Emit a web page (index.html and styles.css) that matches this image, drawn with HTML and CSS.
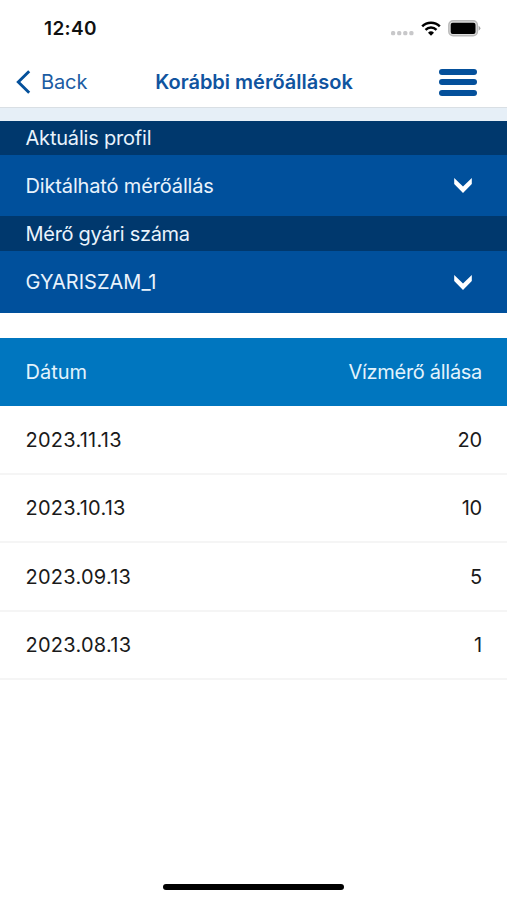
FILE: index.html
```html
<!DOCTYPE html>
<html lang="hu">
<head>
    <meta charset="UTF-8">
    <meta name="viewport" content="width=device-width, initial-scale=1.0">
    <title>Korábbi mérőállások</title>
    <link rel="stylesheet" href="styles.css">
</head>
<body>
    <div class="status-bar">
        <span class="time">12:40</span>
        <div class="status-icons">
            <svg class="signal" width="23" height="5" viewBox="0 0 23 5" fill="#c8c8ca">
                <rect x="0" y="0" width="4.2" height="4.2" rx="1.5"/>
                <rect x="6.1" y="0" width="4.2" height="4.2" rx="1.5"/>
                <rect x="12.2" y="0" width="4.2" height="4.2" rx="1.5"/>
                <rect x="18.3" y="0" width="4.2" height="4.2" rx="1.5"/>
            </svg>
            <svg class="wifi" width="20" height="15" viewBox="0 0 20 15">
                <path d="M1.2 5.3a12.6 12.6 0 0 1 17.6 0M4.5 8.8a8 8 0 0 1 11 0" fill="none" stroke="#000" stroke-width="2.5"/>
                <path d="M10 14.8l-3-3.1a4.4 4.4 0 0 1 6 0z"/>
            </svg>
            <svg class="battery" width="33" height="17" viewBox="0 0 33 17">
                <rect x="0.8" y="0.8" width="28.6" height="15" rx="4.3" fill="#ddd" stroke="#b9b9b9" stroke-width="1.4"/>
                <rect x="2.7" y="2.7" width="24.8" height="11.2" rx="2"/>
                <path d="M30.6 5.8q3.6 2.5 0 5z" fill="#a5a5a5"/>
            </svg>
        </div>
    </div>

    <header class="navbar">
        <a href="#" class="back">
            <svg width="15" height="24" viewBox="0 0 15 24">
                <path d="M13.2 1.3L2.3 12l10.9 10.7" fill="none" stroke="#04509b" stroke-width="2.9"/>
            </svg>
            <span>Back</span>
        </a>
        <h1>Korábbi mérőállások</h1>
        <button class="menu" aria-label="Menü">
            <i></i>
            <i></i>
            <i></i>
        </button>
    </header>

    <section class="filters">
        <div class="filter-label"><span class="label-profile">Aktuális profil</span></div>
        <div class="filter-value">
            <span class="value-profile">Diktálható mérőállás</span>
            <svg width="18" height="15" viewBox="0 0 18 15"><path d="M0.2 0L9 8.6 17.8 0v6L9 15 0.2 6z" fill="#fff"/></svg>
        </div>
        <div class="filter-label meter"><span class="label-meter">Mérő gyári száma</span></div>
        <div class="filter-value meter">
            <span class="value-meter">GYARISZAM_1</span>
            <svg width="18" height="15" viewBox="0 0 18 15"><path d="M0.2 0L9 8.6 17.8 0v6L9 15 0.2 6z" fill="#fff"/></svg>
        </div>
    </section>

    <section class="readings">
        <div class="row head"><span class="head-date">Dátum</span><span class="head-value">Vízmérő állása</span></div>
        <div class="row"><span class="date">2023.11.13</span><span>20</span></div>
        <div class="row"><span class="date">2023.10.13</span><span>10</span></div>
        <div class="row"><span class="date">2023.09.13</span><span>5</span></div>
        <div class="row"><span class="date">2023.08.13</span><span>1</span></div>
    </section>

    <div class="home-indicator"></div>
</body>
</html>
```
FILE: styles.css
```css
* {
    box-sizing: border-box;
}
body {
    font-family: Inter, "Liberation Sans", sans-serif;
    font-size: 20px;
    background: #fff;
    color: #1a1a1a;
    margin: 0;
    height: 900px;
    display: flex;
    flex-direction: column;
    overflow: hidden;
}
.status-bar {
    height: 57px;
    padding: 0 26px 0 44px;
    display: flex;
    align-items: center;
    justify-content: space-between;
}
.time {
    color: #111;
    font-size: 19px;
    font-weight: 600;
    letter-spacing: 0.35px;
}
.status-icons {
    display: flex;
    align-items: center;
}
.signal {
    margin: 9px 7px 0 0;
}
.wifi {
    margin-right: 7px;
}
.navbar {
    height: 51px;
    padding: 0 30px 0 16px;
    border-bottom: 1px solid #d9dfe4;
    color: #1b5ca3;
    display: grid;
    grid-template-columns: 107px 1fr 92px;
    align-items: center;
}
.back {
    display: flex;
    align-items: center;
    gap: 10px;
    color: inherit;
    text-decoration: none;
    letter-spacing: -0.1px;
}
h1 {
    margin: 0;
    color: #10549f;
    font-size: 20px;
    font-weight: 600;
    text-align: center;
    white-space: nowrap;
    letter-spacing: 0;
}
.menu {
    justify-self: end;
    width: 38px;
    padding: 0;
    border: 0;
    background: none;
    display: grid;
    gap: 4.5px;
}
.menu i {
    height: 6px;
    border-radius: 3px;
    background: #04509b;
}
.filters {
    padding-top: 13px;
    background: #e6eff7;
    color: #e9f3fc;
}
.filter-label {
    height: 34px;
    padding: 0 25.5px;
    background: #00386d;
    display: flex;
    align-items: center;
}
.filter-value {
    height: 61px;
    padding: 0 35px 0 25.5px;
    background: #00509c;
    display: flex;
    align-items: center;
    justify-content: space-between;
}
.filter-label.meter {
    height: 35px;
}
.filter-value.meter {
    height: 62px;
}
.label-profile {
    letter-spacing: -0.2px;
}
.value-profile {
    letter-spacing: -0.15px;
}
.label-meter, .head-value {
    letter-spacing: -0.3px;
}
.value-meter {
    letter-spacing: 0;
}
.readings {
    margin-top: 25px;
}
.row {
    height: 68.5px;
    padding: 1px 25px 0 25.5px;
    border-bottom: 2px solid #f5f5f5;
    display: flex;
    align-items: center;
    justify-content: space-between;
    letter-spacing: -0.2px;
}
.row.head {
    height: 68px;
    padding-top: 0;
    border: 0;
    background: #0076bf;
    color: #e3f3fc;
}
.head-date {
    letter-spacing: 0;
}
.date {
    letter-spacing: 0.25px;
}
.home-indicator {
    width: 181px;
    height: 6px;
    margin: auto auto 10px 163px;
    border-radius: 3px;
    background: #000;
}
```
